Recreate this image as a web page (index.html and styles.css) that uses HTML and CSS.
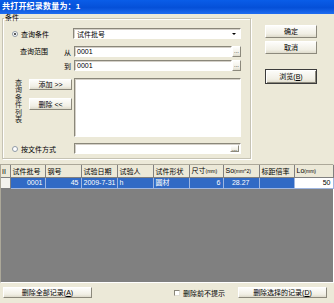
FILE: index.html
```html
<!DOCTYPE html>
<html lang="zh-CN">
  <head>
    <meta charset="UTF-8" />
    <title>共打开纪录数量为：1</title>
    <link rel="stylesheet" href="styles.css">
  </head>
  <body>
    <div class="window">
      <div class="titlebar">共打开纪录数量为：1</div>

      <div class="top">
        <fieldset class="group">
          <legend>条件</legend>

          <div class="row">
            <label class="lead"><span class="radio on"></span>查询条件</label>
            <div class="combo"><span class="combo-text">试件批号</span><span class="arrow"></span></div>
          </div>

          <div class="range">
            <span class="range-label">查询范围</span>
            <div class="range-rows">
              <div class="field-row">
                <span class="ch">从</span>
                <div class="edit">0001</div>
                <button class="dots">...</button>
              </div>
              <div class="field-row">
                <span class="ch">到</span>
                <div class="edit">0001</div>
                <button class="dots">...</button>
              </div>
            </div>
          </div>

          <div class="list-row">
            <div class="vlabel">
              <span>查</span><span>询</span><span>条</span><span>件</span><span>列</span><span>表</span>
            </div>
            <div class="list-btns">
              <button class="btn-add">添加 &gt;&gt;</button>
              <button class="btn-del">删除 &lt;&lt;</button>
            </div>
            <div class="listbox"></div>
          </div>

          <div class="row file-row">
            <label class="lead"><span class="radio"></span>按文件方式</label>
            <div class="edit file-edit"><button class="dots small">...</button></div>
          </div>
        </fieldset>

        <div class="side">
          <button>确定</button>
          <button>取消</button>
          <button class="default">浏览(<u>B</u>)</button>
        </div>
      </div>

      <div class="grid">
        <table>
          <colgroup>
            <col class="c0"><col class="c1"><col class="c2"><col class="c3"><col class="c4">
            <col class="c5"><col class="c6"><col class="c7"><col class="c8"><col class="c9">
          </colgroup>
          <thead>
            <tr>
              <th>II</th>
              <th>试件批号</th>
              <th>钢号</th>
              <th>试验日期</th>
              <th>试验人</th>
              <th>试件形状</th>
              <th>尺寸<small>(mm)</small></th>
              <th>So<small>(mm^2)</small></th>
              <th>标距倍率</th>
              <th>Lo<small>(mm)</small></th>
            </tr>
          </thead>
          <tbody>
            <tr class="selected">
              <td class="ind"></td>
              <td class="num">0001</td>
              <td class="num">45</td>
              <td>2009-7-31</td>
              <td>h</td>
              <td>圆材</td>
              <td class="num">6</td>
              <td class="num so">28.27</td>
              <td></td>
              <td class="num current">50</td>
            </tr>
          </tbody>
        </table>
      </div>

      <div class="bottom">
        <button class="wide">删除全部记录(<u>A</u>)</button>
        <label class="check"><span class="box"></span>删除前不提示</label>
        <button class="wide">删除选择的记录(<u>D</u>)</button>
      </div>
    </div>
  </body>
</html>
```

FILE: styles.css
```css
* {
  box-sizing: border-box;
}

body {
  margin: 0;
  background-color: #ece9d8;
  color: #000;
  font-family: "Liberation Sans", "Noto Sans CJK SC", sans-serif;
  font-size: 7px;
}

.window {
  width: 334px;
  height: 303px;
  display: flex;
  flex-direction: column;
  overflow: hidden;
}

.titlebar {
  height: 14px;
  line-height: 14px;
  padding-left: 2px;
  color: #fff;
  font-size: 8px;
  font-weight: bold;
  letter-spacing: 0.2px;
  background: linear-gradient(#0a5de8, #0550d8 55%, #1f6cf0);
}

button {
  font: inherit;
  color: #000;
  padding: 0;
  background: linear-gradient(#fdfdfb, #f1efe5 70%, #dedbcc);
  border: 1px solid;
  border-color: #fff #8c897c #8c897c #fff;
  line-height: 9px;
}

button u {
  text-decoration: underline;
}

/* top section */

.top {
  display: flex;
  height: 150px;
}

.group {
  margin: 0 0 0 2px;
  padding: 6px 0 3px 0;
  width: 249px;
  height: 145px;
  min-width: 0;
  border: 1px solid #c6c3b4;
  box-shadow: inset 1px 1px #fff, 1px 1px #fff;
}

.group legend {
  margin-left: 1px;
  padding: 0 1px;
  line-height: 8px;
}

.row {
  display: flex;
  align-items: center;
  height: 11px;
}

.lead {
  width: 70px;
  display: flex;
  align-items: center;
  padding-left: 9px;
}

.file-row .lead {
  width: 71px;
}

.radio {
  width: 6px;
  height: 6px;
  margin-right: 3px;
  border-radius: 50%;
  border: 1px solid #8f9aa6;
  background-color: #fff;
  display: flex;
  align-items: center;
  justify-content: center;
}

.radio.on::after {
  content: "";
  width: 2px;
  height: 2px;
  border-radius: 50%;
  background-color: #222;
}

.combo,
.edit,
.listbox {
  background-color: #fff;
  border: 1px solid;
  border-color: #8a877a #fff #fff #8a877a;
  box-shadow: inset 1px 1px #d4d0c8;
}

.combo {
  width: 168px;
  height: 11px;
  display: flex;
  align-items: center;
  justify-content: space-between;
  padding: 0 4px 0 3px;
}

.arrow {
  width: 0;
  height: 0;
  border-left: 2px solid transparent;
  border-right: 2px solid transparent;
  border-top: 2px solid #000;
}

.range {
  display: flex;
  margin-top: 7px;
}

.range-label {
  width: 61px;
  padding-left: 17px;
  line-height: 11px;
}

.range-rows {
  display: flex;
  flex-direction: column;
  gap: 3px;
}

.field-row {
  display: flex;
  align-items: center;
  height: 11px;
}

.ch {
  width: 10px;
}

.edit {
  width: 158px;
  height: 11px;
  line-height: 9px;
  padding-left: 2px;
}

.dots {
  width: 9px;
  height: 11px;
  line-height: 7px;
  font-size: 6px;
}

.list-row {
  display: flex;
  margin-top: 7px;
  height: 59px;
}

.vlabel {
  width: 9px;
  margin: 1px 0 0 11px;
  display: flex;
  flex-direction: column;
  align-items: center;
  color: #222;
}

.vlabel span {
  height: 7.4px;
  line-height: 7.4px;
}

.list-btns {
  width: 43px;
  margin-left: 6px;
  padding-top: 1px;
  display: flex;
  flex-direction: column;
  gap: 8px;
}

.btn-add {
  height: 11px;
}

.btn-del {
  height: 12px;
}

.listbox {
  width: 167px;
  height: 59px;
  margin-left: 2px;
}

.file-row {
  margin-top: 6px;
}

.file-edit {
  width: 167px;
  display: flex;
  align-items: center;
  justify-content: flex-end;
  padding-right: 1px;
}

.dots.small {
  height: 7px;
  line-height: 4px;
}

.side {
  width: 52px;
  margin-left: 14px;
  padding-top: 11px;
  display: flex;
  flex-direction: column;
  gap: 3px;
}

.side button {
  height: 13px;
}

.side .default {
  height: 15px;
  margin-top: 12px;
  outline: 1px solid #3c3c3c;
  outline-offset: -1px;
  box-shadow: inset 1px 1px #fff, inset -1px -1px #8c897c;
}

/* record grid */

.grid {
  height: 119px;
  background-color: #808080;
  border: 1px solid;
  border-color: #aca899 #fff #fff #aca899;
}

.grid table {
  width: 332px;
  table-layout: fixed;
  border-collapse: collapse;
}

.c0 { width: 9px; }
.c1 { width: 35px; }
.c2 { width: 36px; }
.c3 { width: 36px; }
.c4 { width: 36px; }
.c5 { width: 36px; }
.c6 { width: 34px; }
.c7 { width: 36px; }
.c8 { width: 35px; }
.c9 { width: 39px; }

.grid th,
.grid td {
  padding: 0 2px;
  white-space: nowrap;
  overflow: hidden;
  text-align: left;
  font-weight: normal;
}

.grid th {
  height: 12px;
  line-height: 11px;
  background-color: #ece9d8;
  border-right: 1px solid #808080;
  border-bottom: 1px solid #808080;
}

.grid th small {
  font-size: 5px;
}

.grid th:first-child {
  padding: 0 1px;
}

.grid td {
  height: 11px;
  line-height: 10px;
  color: #fff;
  background-color: #316ac5;
  border-right: 1px solid #9fb6e0;
  border-bottom: 1px solid #9fb6e0;
}

.grid td.num {
  text-align: right;
}

.grid td.so {
  padding-right: 9px;
}

.grid td.ind {
  background-color: #f4f3ee;
  border-color: #808080;
}

.grid td.current {
  color: #000;
  background-color: #fff;
}

/* bottom bar */

.bottom {
  flex: 1;
  display: flex;
  align-items: flex-start;
  padding: 4px 7px 0 3px;
}

.wide {
  width: 89px;
  height: 11px;
}

.check {
  margin-left: auto;
  margin-right: 13px;
  margin-top: 2px;
  display: flex;
  align-items: center;
  gap: 3px;
  height: 7px;
}

.box {
  width: 6px;
  height: 6px;
  background-color: #fff;
  border: 1px solid;
  border-color: #8a877a #e0ded4 #e0ded4 #8a877a;
}
```
